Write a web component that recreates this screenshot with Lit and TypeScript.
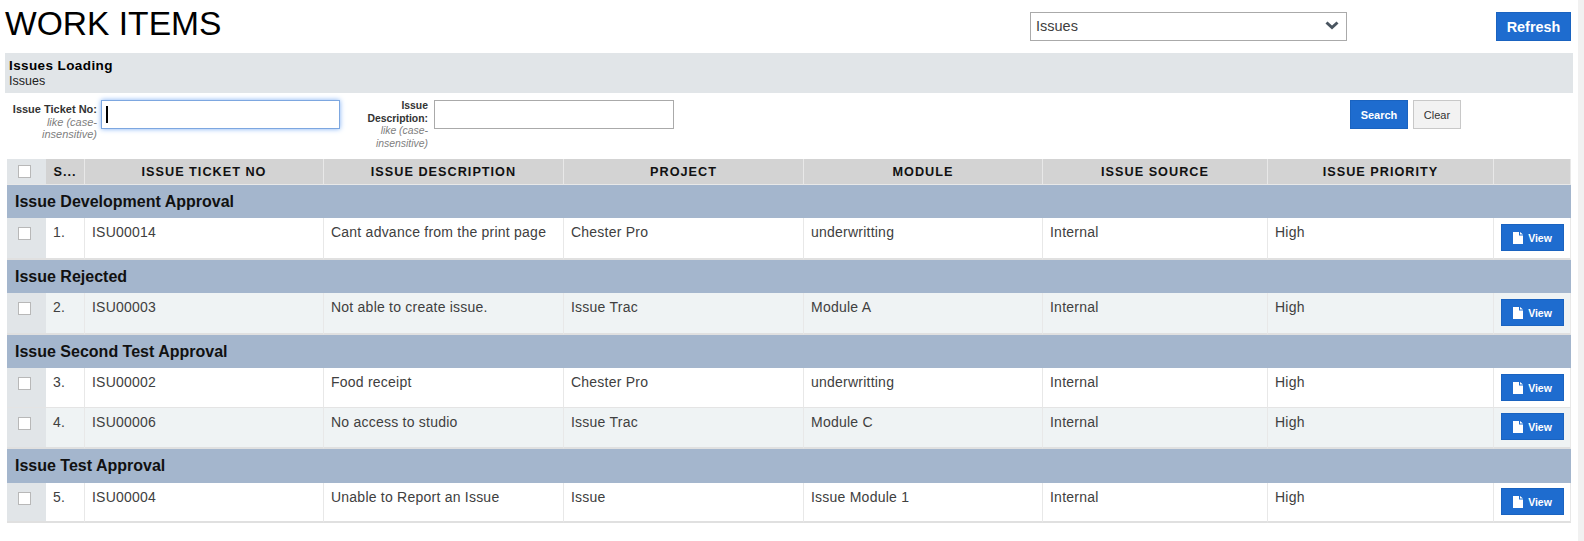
import { LitElement, html, css } from "lit";
import { customElement } from "lit/decorators.js";

type Item = { no: number; ticket: string; desc: string; project: string; module: string; alt?: boolean; tight?: boolean; h: number };
type Group = { title: string; h: number; items: Item[] };

const groups: Group[] = [
  {
    title: "Issue Development Approval",
    h: 33,
    items: [{ no: 1, ticket: "ISU00014", desc: "Cant advance from the print page", project: "Chester Pro", module: "underwritting", h: 42 }],
  },
  {
    title: "Issue Rejected",
    h: 33,
    items: [{ no: 2, ticket: "ISU00003", desc: "Not able to create issue.", project: "Issue Trac", module: "Module A", alt: true, h: 42 }],
  },
  {
    title: "Issue Second Test Approval",
    h: 33,
    items: [
      { no: 3, ticket: "ISU00002", desc: "Food receipt", project: "Chester Pro", module: "underwritting", h: 40 },
      { no: 4, ticket: "ISU00006", desc: "No access to studio", project: "Issue Trac", module: "Module C", alt: true, tight: true, h: 41 },
    ],
  },
  {
    title: "Issue Test Approval",
    h: 34,
    items: [{ no: 5, ticket: "ISU00004", desc: "Unable to Report an Issue", project: "Issue", module: "Issue Module 1", tight: true, h: 40 }],
  },
];

@customElement("app-root")
export class AppRoot extends LitElement {
  static styles = css`
    :host {
      display: block;
      height: 541px;
      overflow: hidden;
      font-family: "Liberation Sans", Arial, sans-serif;
      color: #404040;
      background: #fff;
    }
    .page {
      width: 1573px;
      padding-left: 5px;
      box-sizing: border-box;
    }
    .top {
      display: flex;
      align-items: flex-start;
      height: 53px;
    }
    h1 {
      margin: 5px 0 0;
      width: 1025px;
      font-size: 33.6px;
      line-height: 38px;
      font-weight: 400;
      color: #000;
    }
    .select {
      box-sizing: border-box;
      width: 317px;
      height: 29px;
      margin-top: 12px;
      padding: 0 7px 2px 5px;
      display: flex;
      align-items: center;
      justify-content: space-between;
      border: 1px solid #aaa;
      font-size: 14.5px;
    }
    .btn {
      box-sizing: border-box;
      display: flex;
      align-items: center;
      justify-content: center;
      background: #1e6ccf;
      border: 1px solid #1a63c0;
      color: #fff;
      font-weight: 700;
    }
    .refresh {
      width: 75px;
      height: 29px;
      margin: 12px 0 0 149px;
      font-size: 14.4px;
    }
    .band {
      height: 40px;
      padding: 5px 4px 0;
      box-sizing: border-box;
      background: #e1e5e8;
      font-size: 12.5px;
      line-height: 14px;
      color: #222;
    }
    .band b {
      display: block;
      font-size: 13.5px;
      line-height: 16px;
      letter-spacing: 0.4px;
      color: #000;
    }
    .search {
      display: flex;
      align-items: flex-start;
      height: 66px;
      padding-top: 7px;
      box-sizing: border-box;
    }
    .field {
      display: flex;
      align-items: flex-start;
    }
    .lab {
      text-align: right;
      font-size: 11px;
      line-height: 12.7px;
      font-weight: 700;
      color: #333;
    }
    .lab i {
      display: block;
      font-weight: 400;
      color: #808080;
    }
    .f1 .lab {
      width: 92px;
      padding-top: 3px;
    }
    .f2 { margin-left: 26px; }
    .f2 .lab {
      width: 62px;
      padding-right: 2px;
      font-size: 10.4px;
    }
    .input {
      box-sizing: border-box;
      height: 29px;
      margin-left: 4px;
      background: #fff;
      border: 1px solid #aaa;
    }
    .f1 .input {
      width: 239px;
      border-color: #7da7e0;
      box-shadow: 0 0 5px #7fb0f5;
      padding: 5px 4px;
    }
    .f2 .input { width: 240px; }
    .caret {
      width: 2px;
      height: 17px;
      background: #000;
    }
    .search-btn {
      width: 58px;
      height: 29px;
      margin-left: 676px;
      font-size: 11px;
    }
    .clear {
      box-sizing: border-box;
      width: 48px;
      height: 29px;
      margin-left: 5px;
      display: flex;
      align-items: center;
      justify-content: center;
      background: #f2f2f2;
      border: 1px solid #c8c8c8;
      font-size: 11px;
      color: #333;
    }
    table {
      width: 1564px;
      margin-left: 2px;
      table-layout: fixed;
      border-collapse: separate;
      border-spacing: 0;
    }
    th {
      height: 26px;
      padding: 0;
      background: #d3d3d3;
      border-right: 1px solid #e8e8e8;
      border-bottom: 1px solid #e8e8e8;
      box-sizing: border-box;
      font-size: 12.7px;
      letter-spacing: 1px;
      color: #111;
    }
    th.chk {
      background: #e1e5e8;
      border-right: 0;
    }
    .group td {
      padding: 0 0 0 8px;
      box-sizing: border-box;
      background: #a4b6cd;
      font-size: 16px;
      font-weight: 700;
      color: #111;
    }
    .row td {
      padding: 6px 7px 0;
      box-sizing: border-box;
      vertical-align: top;
      border-right: 1px solid #e8e8e8;
      border-bottom: 1px solid #e4e4e4;
      font-size: 14px;
      line-height: 16px;
      letter-spacing: 0.23px;
      background: #fff;
    }
    .row.alt td { background: #eff3f4; }
    .row td.chk,
    .row.alt td.chk {
      background: #e1e5e8;
      border-right: 0;
      padding: 0;
    }
    .row.last-in-group td { border-bottom: 2px solid #e0e0e0; }
    .row td.act { padding: 6px 0 0 7px; }
    .row.tight td.act { padding-top: 5px; }
    .box {
      display: block;
      box-sizing: border-box;
      width: 13px;
      height: 13px;
      margin: 9px 0 0 11px;
      background: #fff;
      border: 1px solid #b8b8b8;
    }
    th .box { margin: 0 0 0 11px; }
    .view {
      width: 63px;
      height: 27px;
      gap: 5px;
      font-size: 10.5px;
      letter-spacing: 0;
    }
    .track {
      position: fixed;
      top: 0;
      right: 0;
      bottom: 0;
      width: 6px;
      background: #f1f1f1;
    }
  `;

  private renderRow(item: Item, last: boolean) {
    return html`
      <tr class="row ${item.alt ? "alt" : ""} ${item.tight ? "tight" : ""} ${last ? "last-in-group" : ""}" style="height:${item.h}px">
        <td class="chk"><span class="box"></span></td>
        <td>${item.no}.</td>
        <td>${item.ticket}</td>
        <td>${item.desc}</td>
        <td>${item.project}</td>
        <td>${item.module}</td>
        <td>Internal</td>
        <td>High</td>
        <td class="act">
          <div class="btn view">
            <svg width="10" height="12" viewBox="0 0 10 12"><path fill="#fff" d="M0 0h6v3.500h4V12H0zM7 0l3 2.500H7z" /></svg>
            View
          </div>
        </td>
      </tr>
    `;
  }

  render() {
    return html`
      <div class="page">
        <div class="top">
          <h1>WORK ITEMS</h1>
          <div class="select">
            Issues
            <svg width="14" height="9" viewBox="0 0 14 9"><path fill="none" stroke="#4a5560" stroke-width="3" d="M1.500 1.500l5.500 5 5.500-5" /></svg>
          </div>
          <div class="btn refresh">Refresh</div>
        </div>
        <div class="band"><b>Issues Loading</b>Issues</div>
        <div class="search">
          <div class="field f1">
            <div class="lab">Issue Ticket No:<i>like (case-insensitive)</i></div>
            <div class="input"><div class="caret"></div></div>
          </div>
          <div class="field f2">
            <div class="lab">Issue Description:<i>like (case-insensitive)</i></div>
            <div class="input"></div>
          </div>
          <div class="btn search-btn">Search</div>
          <div class="clear">Clear</div>
        </div>
        <table>
          <colgroup>
            <col style="width:39px" /><col style="width:39px" /><col style="width:239px" /><col style="width:240px" />
            <col style="width:240px" /><col style="width:239px" /><col style="width:225px" /><col style="width:226px" /><col style="width:77px" />
          </colgroup>
          <thead>
            <tr>
              <th class="chk"><span class="box"></span></th>
              <th>S...</th>
              <th>ISSUE TICKET NO</th>
              <th>ISSUE DESCRIPTION</th>
              <th>PROJECT</th>
              <th>MODULE</th>
              <th>ISSUE SOURCE</th>
              <th>ISSUE PRIORITY</th>
              <th></th>
            </tr>
          </thead>
          <tbody>
            ${groups.map(
              (g) => html`
                <tr class="group" style="height:${g.h}px"><td colspan="9">${g.title}</td></tr>
                ${g.items.map((it, i) => this.renderRow(it, i === g.items.length - 1))}
              `,
            )}
          </tbody>
        </table>
      </div>
      <div class="track"></div>
    `;
  }
}
